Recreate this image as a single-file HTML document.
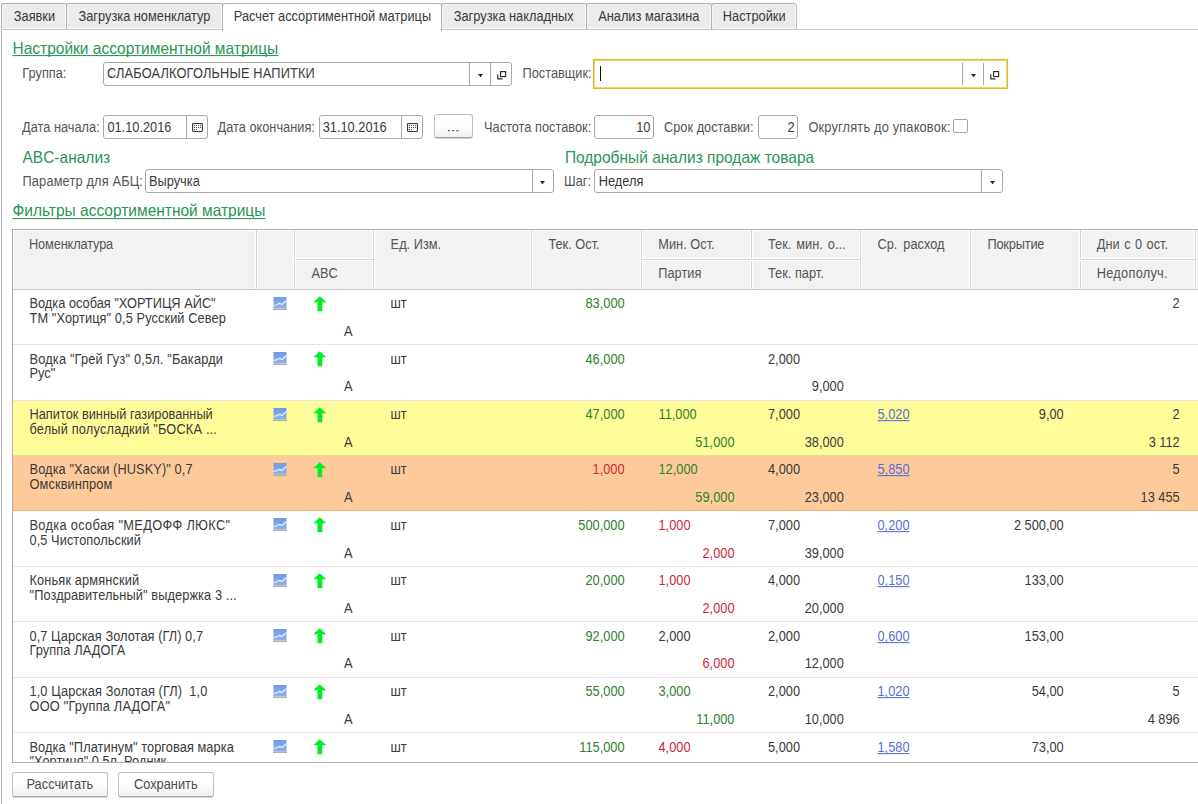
<!DOCTYPE html>
<html><head><meta charset="utf-8"><style>
*{box-sizing:border-box;margin:0;padding:0}
html,body{width:1198px;height:804px;overflow:hidden;background:#fff}
body{position:relative;font-family:"Liberation Sans",sans-serif;font-size:12.8px;color:#3a3a3a}
.t{position:absolute;white-space:pre;line-height:15px;font-size:12.8px;transform:scaleY(1.08);transform-origin:0 12px}
.lbl{color:#555}
.h{position:absolute;white-space:pre;line-height:17px;font-size:15.5px;color:#2b9552;transform:scaleY(1.05);transform-origin:0 14px}
.h.u{text-decoration:underline;text-underline-offset:2px;text-decoration-thickness:1px;text-decoration-skip-ink:none}
.box{position:absolute;border:1px solid #a9a9a9;border-radius:3px;background:#fff}
.ln{position:absolute;background:#a9a9a9}
.tab{position:absolute;top:3px;height:27px;border:1px solid #b0b0b0;border-right-color:#bdbdbd;border-bottom-color:#c6c6c6;border-radius:3px 3px 2px 2px;background:#ebebeb;box-shadow:inset 1px 1px 0 #f6f6f6,inset -1px -1px 0 #fafafa}
.tab.act{background:#fff;height:28px;border-bottom:none;border-radius:3px 3px 0 0;box-shadow:none}
.btn{position:absolute;border:1px solid #bdbdbd;border-bottom-color:#a4a4a4;border-radius:3px;background:linear-gradient(#fff 45%,#f1f1f1);box-shadow:0 1px 0 rgba(0,0,0,0.18)}
.tri{position:absolute;width:5px;height:4px}
.g{color:#2c822c}.r{color:#cf2636}.lk{color:#5572d2;text-decoration:underline;text-underline-offset:1px;text-decoration-skip-ink:none}
</style></head><body>
<div class="ln" style="left:441px;top:29px;width:757px;height:1px;background:#c6c6c6"></div>
<div class="tab" style="left:1px;width:66px"></div>
<div class="t " style="left:13.80px;top:8.80px;">Заявки</div>
<div class="tab" style="left:66px;width:157px"></div>
<div class="t " style="left:78.50px;top:8.80px;">Загрузка номенклатур</div>
<div class="tab act" style="left:222px;width:220px"></div>
<div class="t " style="left:233.80px;top:8.80px;">Расчет ассортиментной матрицы</div>
<div class="tab" style="left:441px;width:146px"></div>
<div class="t " style="left:453.75px;top:8.80px;">Загрузка накладных</div>
<div class="tab" style="left:586px;width:126px"></div>
<div class="t " style="left:598.20px;top:8.80px;">Анализ магазина</div>
<div class="tab" style="left:711px;width:86px"></div>
<div class="t " style="left:722.80px;top:8.80px;">Настройки</div>
<div class="ln" style="left:1px;top:30px;width:1px;height:774px;background:#b4b4b4"></div>
<div class="h u" style="text-underline-offset:1px;left:12.50px;top:40.20px;">Настройки ассортиментной матрицы</div>
<div class="t lbl" style="left:22.30px;top:66.10px;">Группа:</div>
<div class="box" style="left:103px;top:62px;width:409px;height:24px;"></div>
<div class="ln" style="left:469px;top:62px;width:1px;height:24px"></div>
<div class="ln" style="left:490px;top:62px;width:1px;height:24px"></div>
<div class="t " style="left:107.00px;top:66.10px;letter-spacing:0.16px">СЛАБОАЛКОГОЛЬНЫЕ НАПИТКИ</div>
<svg class="tri" style="left:478px;top:73.5px" width="5" height="4" viewBox="0 0 5 4"><polygon points="0,0 5,0 2.5,3.2" fill="#222"/></svg>
<svg style="position:absolute;left:497px;top:71px" width="10" height="9" viewBox="0 0 10 9"><rect x="3.6" y="0.6" width="5" height="5" fill="none" stroke="#2b2b2b" stroke-width="1.15"/><path d="M0.8 3.2V7.9H5.6" fill="none" stroke="#2b2b2b" stroke-width="1.15"/></svg>
<div class="t lbl" style="left:522.50px;top:66.10px;">Поставщик:</div>
<div style="position:absolute;left:593px;top:59px;width:415px;height:30px;border:1px solid #d6b94e;box-shadow:inset 0 0 0 1px #f0d660,0 0 0 1px #fffadb;background:#fff"></div>
<div class="ln" style="left:962px;top:63px;width:1px;height:22px"></div>
<div class="ln" style="left:983px;top:63px;width:1px;height:22px"></div>
<div style="position:absolute;left:600px;top:66px;width:1px;height:15px;background:#111"></div>
<svg class="tri" style="left:971.2px;top:73.7px" width="5" height="4" viewBox="0 0 5 4"><polygon points="0,0 5,0 2.5,3.2" fill="#222"/></svg>
<svg style="position:absolute;left:990px;top:71px" width="10" height="9" viewBox="0 0 10 9"><rect x="3.6" y="0.6" width="5" height="5" fill="none" stroke="#2b2b2b" stroke-width="1.15"/><path d="M0.8 3.2V7.9H5.6" fill="none" stroke="#2b2b2b" stroke-width="1.15"/></svg>
<div class="t lbl" style="left:22.00px;top:119.80px;">Дата начала:</div>
<div class="box" style="left:103px;top:115px;width:105px;height:24px;"></div>
<div class="ln" style="left:186px;top:115px;width:1px;height:24px"></div>
<div class="t " style="left:107.40px;top:119.80px;">01.10.2016</div>
<svg style="position:absolute;left:192px;top:123px" width="11" height="9" viewBox="0 0 11 9"><rect x="0.55" y="0.55" width="9.9" height="7.9" rx="0.6" fill="#fff" stroke="#3a3a3a" stroke-width="1.1"/><g fill="#555"><rect x="1.9" y="1.8" width="1.1" height="1.1"/><rect x="3.9" y="1.8" width="1.1" height="1.1"/><rect x="6" y="1.8" width="1.1" height="1.1"/><rect x="8" y="1.8" width="1.1" height="1.1"/><rect x="1.9" y="3.9" width="1.1" height="1.1"/><rect x="3.9" y="3.9" width="1.1" height="1.1"/><rect x="6" y="3.9" width="1.1" height="1.1"/><rect x="8" y="3.9" width="1.1" height="1.1"/><rect x="1.9" y="6" width="1.1" height="1.1"/><rect x="3.9" y="6" width="1.1" height="1.1"/></g></svg>
<div class="t lbl" style="left:217.50px;top:119.80px;">Дата окончания:</div>
<div class="box" style="left:319px;top:115px;width:104px;height:24px;"></div>
<div class="ln" style="left:401px;top:115px;width:1px;height:24px"></div>
<div class="t " style="left:322.70px;top:119.80px;">31.10.2016</div>
<svg style="position:absolute;left:407px;top:123px" width="11" height="9" viewBox="0 0 11 9"><rect x="0.55" y="0.55" width="9.9" height="7.9" rx="0.6" fill="#fff" stroke="#3a3a3a" stroke-width="1.1"/><g fill="#555"><rect x="1.9" y="1.8" width="1.1" height="1.1"/><rect x="3.9" y="1.8" width="1.1" height="1.1"/><rect x="6" y="1.8" width="1.1" height="1.1"/><rect x="8" y="1.8" width="1.1" height="1.1"/><rect x="1.9" y="3.9" width="1.1" height="1.1"/><rect x="3.9" y="3.9" width="1.1" height="1.1"/><rect x="6" y="3.9" width="1.1" height="1.1"/><rect x="8" y="3.9" width="1.1" height="1.1"/><rect x="1.9" y="6" width="1.1" height="1.1"/><rect x="3.9" y="6" width="1.1" height="1.1"/></g></svg>
<div class="btn" style="left:434px;top:114px;width:39px;height:24px;"></div>
<svg style="position:absolute;left:448px;top:130px" width="11" height="2" viewBox="0 0 11 2"><g fill="#666"><rect x="0" y="0" width="2" height="1.3"/><rect x="4.2" y="0" width="2" height="1.3"/><rect x="8.4" y="0" width="2" height="1.3"/></g></svg>
<div class="t lbl" style="left:484.00px;top:119.80px;">Частота поставок:</div>
<div class="box" style="left:594px;top:115px;width:60px;height:24px;"></div>
<div class="t " style="right:547.60px;top:119.80px;">10</div>
<div class="t lbl" style="left:664.00px;top:119.80px;">Срок доставки:</div>
<div class="box" style="left:758px;top:115px;width:40px;height:24px;"></div>
<div class="t " style="right:403.30px;top:119.80px;">2</div>
<div class="t lbl" style="left:808.40px;top:119.80px;letter-spacing:0.18px">Округлять до упаковок:</div>
<div class="box" style="left:953px;top:119px;width:15px;height:14px;border-radius:2px;border-color:#a6a6a6"></div>
<div class="h" style="left:22.50px;top:149.10px;">ABC-анализ</div>
<div class="h" style="left:564.90px;top:149.00px;">Подробный анализ продаж товара</div>
<div class="t lbl" style="left:22.50px;top:174.10px;letter-spacing:0.15px">Параметр для АБЦ:</div>
<div class="box" style="left:145px;top:169px;width:409px;height:24px;"></div>
<div class="ln" style="left:532px;top:169px;width:1px;height:24px"></div>
<div class="t " style="left:149.00px;top:174.10px;">Выручка</div>
<svg class="tri" style="left:540.3px;top:180.7px" width="5" height="4" viewBox="0 0 5 4"><polygon points="0,0 5,0 2.5,3.2" fill="#222"/></svg>
<div class="t lbl" style="left:564.00px;top:174.10px;">Шаг:</div>
<div class="box" style="left:594px;top:169px;width:409px;height:24px;"></div>
<div class="ln" style="left:981px;top:169px;width:1px;height:24px"></div>
<div class="t " style="left:598.80px;top:174.10px;">Неделя</div>
<svg class="tri" style="left:990px;top:180.7px" width="5" height="4" viewBox="0 0 5 4"><polygon points="0,0 5,0 2.5,3.2" fill="#222"/></svg>
<div class="h u" style="left:12.50px;top:202.20px;">Фильтры ассортиментной матрицы</div>
<div style="position:absolute;left:12px;top:229px;width:1190px;height:534px;border:1px solid #b0b0b0;border-right:none;overflow:hidden">
<div style="position:absolute;left:0;top:0;width:1200px;height:59px;background:#f2f2f2;border-top:1px solid #fff;border-left:1px solid #fff"></div>
<div style="position:absolute;left:0;top:59px;width:1200px;height:1px;background:#c8c8c8"></div>
<div style="position:absolute;left:243px;top:0;width:1px;height:59px;background:#d4d4d4;box-shadow:1px 0 0 #fff,-1px 0 0 #fff"></div>
<div style="position:absolute;left:281px;top:0;width:1px;height:59px;background:#d4d4d4;box-shadow:1px 0 0 #fff,-1px 0 0 #fff"></div>
<div style="position:absolute;left:360px;top:0;width:1px;height:59px;background:#d4d4d4;box-shadow:1px 0 0 #fff,-1px 0 0 #fff"></div>
<div style="position:absolute;left:518px;top:0;width:1px;height:59px;background:#d4d4d4;box-shadow:1px 0 0 #fff,-1px 0 0 #fff"></div>
<div style="position:absolute;left:628px;top:0;width:1px;height:59px;background:#d4d4d4;box-shadow:1px 0 0 #fff,-1px 0 0 #fff"></div>
<div style="position:absolute;left:738px;top:0;width:1px;height:59px;background:#d4d4d4;box-shadow:1px 0 0 #fff,-1px 0 0 #fff"></div>
<div style="position:absolute;left:847px;top:0;width:1px;height:59px;background:#d4d4d4;box-shadow:1px 0 0 #fff,-1px 0 0 #fff"></div>
<div style="position:absolute;left:957px;top:0;width:1px;height:59px;background:#d4d4d4;box-shadow:1px 0 0 #fff,-1px 0 0 #fff"></div>
<div style="position:absolute;left:1067px;top:0;width:1px;height:59px;background:#d4d4d4;box-shadow:1px 0 0 #fff,-1px 0 0 #fff"></div>
<div style="position:absolute;left:1182px;top:0;width:1px;height:59px;background:#d4d4d4;box-shadow:1px 0 0 #fff,-1px 0 0 #fff"></div>
<div style="position:absolute;left:281px;top:29px;width:79px;height:1px;background:#d4d4d4;box-shadow:0 1px 0 #fff,0 -1px 0 #fff"></div>
<div style="position:absolute;left:628px;top:29px;width:110px;height:1px;background:#d4d4d4;box-shadow:0 1px 0 #fff,0 -1px 0 #fff"></div>
<div style="position:absolute;left:738px;top:29px;width:109px;height:1px;background:#d4d4d4;box-shadow:0 1px 0 #fff,0 -1px 0 #fff"></div>
<div style="position:absolute;left:1067px;top:29px;width:115px;height:1px;background:#d4d4d4;box-shadow:0 1px 0 #fff,0 -1px 0 #fff"></div>
<div class="t lbl" style="left:16.00px;top:7.20px;letter-spacing:-0.15px">Номенклатура</div>
<div class="t lbl" style="left:377.60px;top:7.20px;">Ед. Изм.</div>
<div class="t lbl" style="left:535.40px;top:7.20px;">Тек. Ост.</div>
<div class="t lbl" style="left:645.30px;top:7.20px;">Мин. Ост.</div>
<div class="t lbl" style="left:755.00px;top:7.20px;word-spacing:1.4px">Тек. мин. о...</div>
<div class="t lbl" style="left:864.40px;top:7.20px;word-spacing:2.5px">Ср. расход</div>
<div class="t lbl" style="left:974.40px;top:7.20px;letter-spacing:-0.18px">Покрытие</div>
<div class="t lbl" style="left:1083.80px;top:7.20px;word-spacing:0.9px">Дни с 0 ост.</div>
<div class="t lbl" style="left:298.40px;top:35.90px;">ABC</div>
<div class="t lbl" style="left:645.30px;top:35.90px;">Партия</div>
<div class="t lbl" style="left:755.00px;top:35.90px;">Тек. парт.</div>
<div class="t lbl" style="left:1083.80px;top:35.90px;letter-spacing:0.25px">Недополуч.</div>
<div style="position:absolute;left:0;top:171px;width:1200px;height:55px;background:#fffd9a"></div>
<div style="position:absolute;left:0;top:226px;width:1200px;height:55px;background:#ffca99"></div>
<div style="position:absolute;left:0;top:114px;width:1200px;height:1px;background:rgba(0,0,0,0.105)"></div>
<div style="position:absolute;left:0;top:170px;width:1200px;height:1px;background:rgba(0,0,0,0.105)"></div>
<div style="position:absolute;left:0;top:225px;width:1200px;height:1px;background:rgba(0,0,0,0.105)"></div>
<div style="position:absolute;left:0;top:280px;width:1200px;height:1px;background:rgba(0,0,0,0.105)"></div>
<div style="position:absolute;left:0;top:336px;width:1200px;height:1px;background:rgba(0,0,0,0.105)"></div>
<div style="position:absolute;left:0;top:391px;width:1200px;height:1px;background:rgba(0,0,0,0.105)"></div>
<div style="position:absolute;left:0;top:447px;width:1200px;height:1px;background:rgba(0,0,0,0.105)"></div>
<div style="position:absolute;left:0;top:502px;width:1200px;height:1px;background:rgba(0,0,0,0.105)"></div>
<div class="t " style="left:16.50px;top:66.10px;letter-spacing:0.000px">Водка особая "ХОРТИЦЯ АЙС"</div>
<div class="t " style="left:16.50px;top:80.80px;letter-spacing:0.083px">ТМ "Хортиця" 0,5 Русский Север</div>
<svg style="position:absolute;left:260px;top:67.0px" width="15" height="14" viewBox="0 0 15 14"><defs><linearGradient id="cg0" x1="0" y1="0" x2="0" y2="1"><stop offset="0" stop-color="#6f9be6"/><stop offset="1" stop-color="#8fb2ee"/></linearGradient></defs><rect x="0.5" y="0" width="13" height="11.5" fill="url(#cg0)"/><polyline points="0.5,8.5 3,8 6.5,6.5 9,7.5 13.5,3.5" fill="none" stroke="#e8f0ff" stroke-width="1.2"/><rect x="0" y="11.5" width="14" height="1.6" fill="#b8b0a0"/></svg>
<svg style="position:absolute;left:300px;top:65.5px" width="14" height="16" viewBox="0 0 14 16"><path d="M6.8 0.3 L13.4 6.2 L9.3 6.2 L9.3 15.2 L4.5 15.2 L4.5 6.2 L0.3 6.2 Z" fill="#00ee22"/></svg>
<div class="t " style="left:auto;right:849.50px;top:93.80px;">A</div>
<div class="t " style="left:377.50px;top:66.10px;">шт</div>
<div class="t g" style="left:auto;right:577.40px;top:66.10px;">83,000</div>
<div class="t " style="left:auto;right:22.30px;top:66.10px;">2</div>
<div class="t " style="left:16.50px;top:121.53px;letter-spacing:0.170px">Водка "Грей Гуз" 0,5л. "Бакарди</div>
<div class="t " style="left:16.50px;top:136.23px;letter-spacing:0.000px">Рус"</div>
<svg style="position:absolute;left:260px;top:122.0px" width="15" height="14" viewBox="0 0 15 14"><defs><linearGradient id="cg1" x1="0" y1="0" x2="0" y2="1"><stop offset="0" stop-color="#6f9be6"/><stop offset="1" stop-color="#8fb2ee"/></linearGradient></defs><rect x="0.5" y="0" width="13" height="11.5" fill="url(#cg1)"/><polyline points="0.5,8.5 3,8 6.5,6.5 9,7.5 13.5,3.5" fill="none" stroke="#e8f0ff" stroke-width="1.2"/><rect x="0" y="11.5" width="14" height="1.6" fill="#b8b0a0"/></svg>
<svg style="position:absolute;left:300px;top:120.5px" width="14" height="16" viewBox="0 0 14 16"><path d="M6.8 0.3 L13.4 6.2 L9.3 6.2 L9.3 15.2 L4.5 15.2 L4.5 6.2 L0.3 6.2 Z" fill="#00ee22"/></svg>
<div class="t " style="left:auto;right:849.50px;top:149.23px;">A</div>
<div class="t " style="left:377.50px;top:121.53px;">шт</div>
<div class="t g" style="left:auto;right:577.40px;top:121.53px;">46,000</div>
<div class="t " style="left:755.00px;top:121.53px;">2,000</div>
<div class="t " style="left:auto;right:358.20px;top:149.23px;">9,000</div>
<div class="t " style="left:16.50px;top:176.96px;letter-spacing:0.000px">Напиток винный газированный</div>
<div class="t " style="left:16.50px;top:191.66px;letter-spacing:0.170px">белый полусладкий "БОСКА ...</div>
<svg style="position:absolute;left:260px;top:178.0px" width="15" height="14" viewBox="0 0 15 14"><defs><linearGradient id="cg2" x1="0" y1="0" x2="0" y2="1"><stop offset="0" stop-color="#6f9be6"/><stop offset="1" stop-color="#8fb2ee"/></linearGradient></defs><rect x="0.5" y="0" width="13" height="11.5" fill="url(#cg2)"/><polyline points="0.5,8.5 3,8 6.5,6.5 9,7.5 13.5,3.5" fill="none" stroke="#e8f0ff" stroke-width="1.2"/><rect x="0" y="11.5" width="14" height="1.6" fill="#b8b0a0"/></svg>
<svg style="position:absolute;left:300px;top:176.5px" width="14" height="16" viewBox="0 0 14 16"><path d="M6.8 0.3 L13.4 6.2 L9.3 6.2 L9.3 15.2 L4.5 15.2 L4.5 6.2 L0.3 6.2 Z" fill="#00ee22"/></svg>
<div class="t " style="left:auto;right:849.50px;top:204.66px;">A</div>
<div class="t " style="left:377.50px;top:176.96px;">шт</div>
<div class="t g" style="left:auto;right:577.40px;top:176.96px;">47,000</div>
<div class="t g" style="left:645.50px;top:176.96px;">11,000</div>
<div class="t g" style="left:auto;right:467.50px;top:204.66px;">51,000</div>
<div class="t " style="left:755.00px;top:176.96px;">7,000</div>
<div class="t " style="left:auto;right:358.20px;top:204.66px;">38,000</div>
<div class="t lk" style="left:864.50px;top:176.96px;">5,020</div>
<div class="t " style="left:auto;right:138.30px;top:176.96px;">9,00</div>
<div class="t " style="left:auto;right:22.30px;top:176.96px;">2</div>
<div class="t " style="left:auto;right:22.30px;top:204.66px;">3 112</div>
<div class="t " style="left:16.50px;top:232.39px;letter-spacing:0.096px">Водка "Хаски (HUSKY)" 0,7</div>
<div class="t " style="left:16.50px;top:247.09px;letter-spacing:0.100px">Омсквинпром</div>
<svg style="position:absolute;left:260px;top:233.0px" width="15" height="14" viewBox="0 0 15 14"><defs><linearGradient id="cg3" x1="0" y1="0" x2="0" y2="1"><stop offset="0" stop-color="#6f9be6"/><stop offset="1" stop-color="#8fb2ee"/></linearGradient></defs><rect x="0.5" y="0" width="13" height="11.5" fill="url(#cg3)"/><polyline points="0.5,8.5 3,8 6.5,6.5 9,7.5 13.5,3.5" fill="none" stroke="#e8f0ff" stroke-width="1.2"/><rect x="0" y="11.5" width="14" height="1.6" fill="#b8b0a0"/></svg>
<svg style="position:absolute;left:300px;top:231.5px" width="14" height="16" viewBox="0 0 14 16"><path d="M6.8 0.3 L13.4 6.2 L9.3 6.2 L9.3 15.2 L4.5 15.2 L4.5 6.2 L0.3 6.2 Z" fill="#00ee22"/></svg>
<div class="t " style="left:auto;right:849.50px;top:260.09px;">A</div>
<div class="t " style="left:377.50px;top:232.39px;">шт</div>
<div class="t r" style="left:auto;right:577.40px;top:232.39px;">1,000</div>
<div class="t g" style="left:645.50px;top:232.39px;">12,000</div>
<div class="t g" style="left:auto;right:467.50px;top:260.09px;">59,000</div>
<div class="t " style="left:755.00px;top:232.39px;">4,000</div>
<div class="t " style="left:auto;right:358.20px;top:260.09px;">23,000</div>
<div class="t lk" style="left:864.50px;top:232.39px;">5,850</div>
<div class="t " style="left:auto;right:22.30px;top:232.39px;">5</div>
<div class="t " style="left:auto;right:22.30px;top:260.09px;">13 455</div>
<div class="t " style="left:16.50px;top:287.82px;letter-spacing:0.320px">Водка особая "МЕДОФФ ЛЮКС"</div>
<div class="t " style="left:16.50px;top:302.52px;letter-spacing:0.062px">0,5 Чистопольский</div>
<svg style="position:absolute;left:260px;top:288.0px" width="15" height="14" viewBox="0 0 15 14"><defs><linearGradient id="cg4" x1="0" y1="0" x2="0" y2="1"><stop offset="0" stop-color="#6f9be6"/><stop offset="1" stop-color="#8fb2ee"/></linearGradient></defs><rect x="0.5" y="0" width="13" height="11.5" fill="url(#cg4)"/><polyline points="0.5,8.5 3,8 6.5,6.5 9,7.5 13.5,3.5" fill="none" stroke="#e8f0ff" stroke-width="1.2"/><rect x="0" y="11.5" width="14" height="1.6" fill="#b8b0a0"/></svg>
<svg style="position:absolute;left:300px;top:286.5px" width="14" height="16" viewBox="0 0 14 16"><path d="M6.8 0.3 L13.4 6.2 L9.3 6.2 L9.3 15.2 L4.5 15.2 L4.5 6.2 L0.3 6.2 Z" fill="#00ee22"/></svg>
<div class="t " style="left:auto;right:849.50px;top:315.52px;">A</div>
<div class="t " style="left:377.50px;top:287.82px;">шт</div>
<div class="t g" style="left:auto;right:577.40px;top:287.82px;">500,000</div>
<div class="t r" style="left:645.50px;top:287.82px;">1,000</div>
<div class="t r" style="left:auto;right:467.50px;top:315.52px;">2,000</div>
<div class="t " style="left:755.00px;top:287.82px;">7,000</div>
<div class="t " style="left:auto;right:358.20px;top:315.52px;">39,000</div>
<div class="t lk" style="left:864.50px;top:287.82px;">0,200</div>
<div class="t " style="left:auto;right:138.30px;top:287.82px;">2 500,00</div>
<div class="t " style="left:16.50px;top:343.25px;letter-spacing:0.133px">Коньяк армянский</div>
<div class="t " style="left:16.50px;top:357.95px;letter-spacing:0.097px">"Поздравительный" выдержка 3 ...</div>
<svg style="position:absolute;left:260px;top:344.0px" width="15" height="14" viewBox="0 0 15 14"><defs><linearGradient id="cg5" x1="0" y1="0" x2="0" y2="1"><stop offset="0" stop-color="#6f9be6"/><stop offset="1" stop-color="#8fb2ee"/></linearGradient></defs><rect x="0.5" y="0" width="13" height="11.5" fill="url(#cg5)"/><polyline points="0.5,8.5 3,8 6.5,6.5 9,7.5 13.5,3.5" fill="none" stroke="#e8f0ff" stroke-width="1.2"/><rect x="0" y="11.5" width="14" height="1.6" fill="#b8b0a0"/></svg>
<svg style="position:absolute;left:300px;top:342.5px" width="14" height="16" viewBox="0 0 14 16"><path d="M6.8 0.3 L13.4 6.2 L9.3 6.2 L9.3 15.2 L4.5 15.2 L4.5 6.2 L0.3 6.2 Z" fill="#00ee22"/></svg>
<div class="t " style="left:auto;right:849.50px;top:370.95px;">A</div>
<div class="t " style="left:377.50px;top:343.25px;">шт</div>
<div class="t g" style="left:auto;right:577.40px;top:343.25px;">20,000</div>
<div class="t r" style="left:645.50px;top:343.25px;">1,000</div>
<div class="t r" style="left:auto;right:467.50px;top:370.95px;">2,000</div>
<div class="t " style="left:755.00px;top:343.25px;">4,000</div>
<div class="t " style="left:auto;right:358.20px;top:370.95px;">20,000</div>
<div class="t lk" style="left:864.50px;top:343.25px;">0,150</div>
<div class="t " style="left:auto;right:138.30px;top:343.25px;">133,00</div>
<div class="t " style="left:16.50px;top:398.68px;letter-spacing:0.056px">0,7 Царская Золотая (ГЛ) 0,7</div>
<div class="t " style="left:16.50px;top:413.38px;letter-spacing:0.083px">Группа ЛАДОГА</div>
<svg style="position:absolute;left:260px;top:399.0px" width="15" height="14" viewBox="0 0 15 14"><defs><linearGradient id="cg6" x1="0" y1="0" x2="0" y2="1"><stop offset="0" stop-color="#6f9be6"/><stop offset="1" stop-color="#8fb2ee"/></linearGradient></defs><rect x="0.5" y="0" width="13" height="11.5" fill="url(#cg6)"/><polyline points="0.5,8.5 3,8 6.5,6.5 9,7.5 13.5,3.5" fill="none" stroke="#e8f0ff" stroke-width="1.2"/><rect x="0" y="11.5" width="14" height="1.6" fill="#b8b0a0"/></svg>
<svg style="position:absolute;left:300px;top:397.5px" width="14" height="16" viewBox="0 0 14 16"><path d="M6.8 0.3 L13.4 6.2 L9.3 6.2 L9.3 15.2 L4.5 15.2 L4.5 6.2 L0.3 6.2 Z" fill="#00ee22"/></svg>
<div class="t " style="left:auto;right:849.50px;top:426.38px;">A</div>
<div class="t " style="left:377.50px;top:398.68px;">шт</div>
<div class="t g" style="left:auto;right:577.40px;top:398.68px;">92,000</div>
<div class="t " style="left:645.50px;top:398.68px;">2,000</div>
<div class="t r" style="left:auto;right:467.50px;top:426.38px;">6,000</div>
<div class="t " style="left:755.00px;top:398.68px;">2,000</div>
<div class="t " style="left:auto;right:358.20px;top:426.38px;">12,000</div>
<div class="t lk" style="left:864.50px;top:398.68px;">0,600</div>
<div class="t " style="left:auto;right:138.30px;top:398.68px;">153,00</div>
<div class="t " style="left:16.50px;top:454.11px;letter-spacing:0.079px">1,0 Царская Золотая (ГЛ)  1,0</div>
<div class="t " style="left:16.50px;top:468.81px;letter-spacing:0.189px">ООО "Группа ЛАДОГА"</div>
<svg style="position:absolute;left:260px;top:455.0px" width="15" height="14" viewBox="0 0 15 14"><defs><linearGradient id="cg7" x1="0" y1="0" x2="0" y2="1"><stop offset="0" stop-color="#6f9be6"/><stop offset="1" stop-color="#8fb2ee"/></linearGradient></defs><rect x="0.5" y="0" width="13" height="11.5" fill="url(#cg7)"/><polyline points="0.5,8.5 3,8 6.5,6.5 9,7.5 13.5,3.5" fill="none" stroke="#e8f0ff" stroke-width="1.2"/><rect x="0" y="11.5" width="14" height="1.6" fill="#b8b0a0"/></svg>
<svg style="position:absolute;left:300px;top:453.5px" width="14" height="16" viewBox="0 0 14 16"><path d="M6.8 0.3 L13.4 6.2 L9.3 6.2 L9.3 15.2 L4.5 15.2 L4.5 6.2 L0.3 6.2 Z" fill="#00ee22"/></svg>
<div class="t " style="left:auto;right:849.50px;top:481.81px;">A</div>
<div class="t " style="left:377.50px;top:454.11px;">шт</div>
<div class="t g" style="left:auto;right:577.40px;top:454.11px;">55,000</div>
<div class="t g" style="left:645.50px;top:454.11px;">3,000</div>
<div class="t g" style="left:auto;right:467.50px;top:481.81px;">11,000</div>
<div class="t " style="left:755.00px;top:454.11px;">2,000</div>
<div class="t " style="left:auto;right:358.20px;top:481.81px;">10,000</div>
<div class="t lk" style="left:864.50px;top:454.11px;">1,020</div>
<div class="t " style="left:auto;right:138.30px;top:454.11px;">54,00</div>
<div class="t " style="left:auto;right:22.30px;top:454.11px;">5</div>
<div class="t " style="left:auto;right:22.30px;top:481.81px;">4 896</div>
<div class="t " style="left:16.50px;top:509.54px;letter-spacing:0.063px">Водка "Платинум" торговая марка</div>
<div class="t " style="left:16.50px;top:524.24px;letter-spacing:0.000px">"Хортиця" 0,5л. Родник</div>
<svg style="position:absolute;left:260px;top:510.0px" width="15" height="14" viewBox="0 0 15 14"><defs><linearGradient id="cg8" x1="0" y1="0" x2="0" y2="1"><stop offset="0" stop-color="#6f9be6"/><stop offset="1" stop-color="#8fb2ee"/></linearGradient></defs><rect x="0.5" y="0" width="13" height="11.5" fill="url(#cg8)"/><polyline points="0.5,8.5 3,8 6.5,6.5 9,7.5 13.5,3.5" fill="none" stroke="#e8f0ff" stroke-width="1.2"/><rect x="0" y="11.5" width="14" height="1.6" fill="#b8b0a0"/></svg>
<svg style="position:absolute;left:300px;top:508.5px" width="14" height="16" viewBox="0 0 14 16"><path d="M6.8 0.3 L13.4 6.2 L9.3 6.2 L9.3 15.2 L4.5 15.2 L4.5 6.2 L0.3 6.2 Z" fill="#00ee22"/></svg>
<div class="t " style="left:auto;right:849.50px;top:537.24px;">A</div>
<div class="t " style="left:377.50px;top:509.54px;">шт</div>
<div class="t g" style="left:auto;right:577.40px;top:509.54px;">115,000</div>
<div class="t r" style="left:645.50px;top:509.54px;">4,000</div>
<div class="t " style="left:755.00px;top:509.54px;">5,000</div>
<div class="t lk" style="left:864.50px;top:509.54px;">1,580</div>
<div class="t " style="left:auto;right:138.30px;top:509.54px;">73,00</div>
</div>
<div class="btn" style="left:12px;top:772px;width:96px;height:25px;"></div>
<div class="t " style="left:26.50px;top:776.60px;color:#4a4a4a;">Рассчитать</div>
<div class="btn" style="left:118px;top:772px;width:96px;height:25px;"></div>
<div class="t " style="left:134.00px;top:776.60px;color:#4a4a4a;">Сохранить</div>
</body></html>
